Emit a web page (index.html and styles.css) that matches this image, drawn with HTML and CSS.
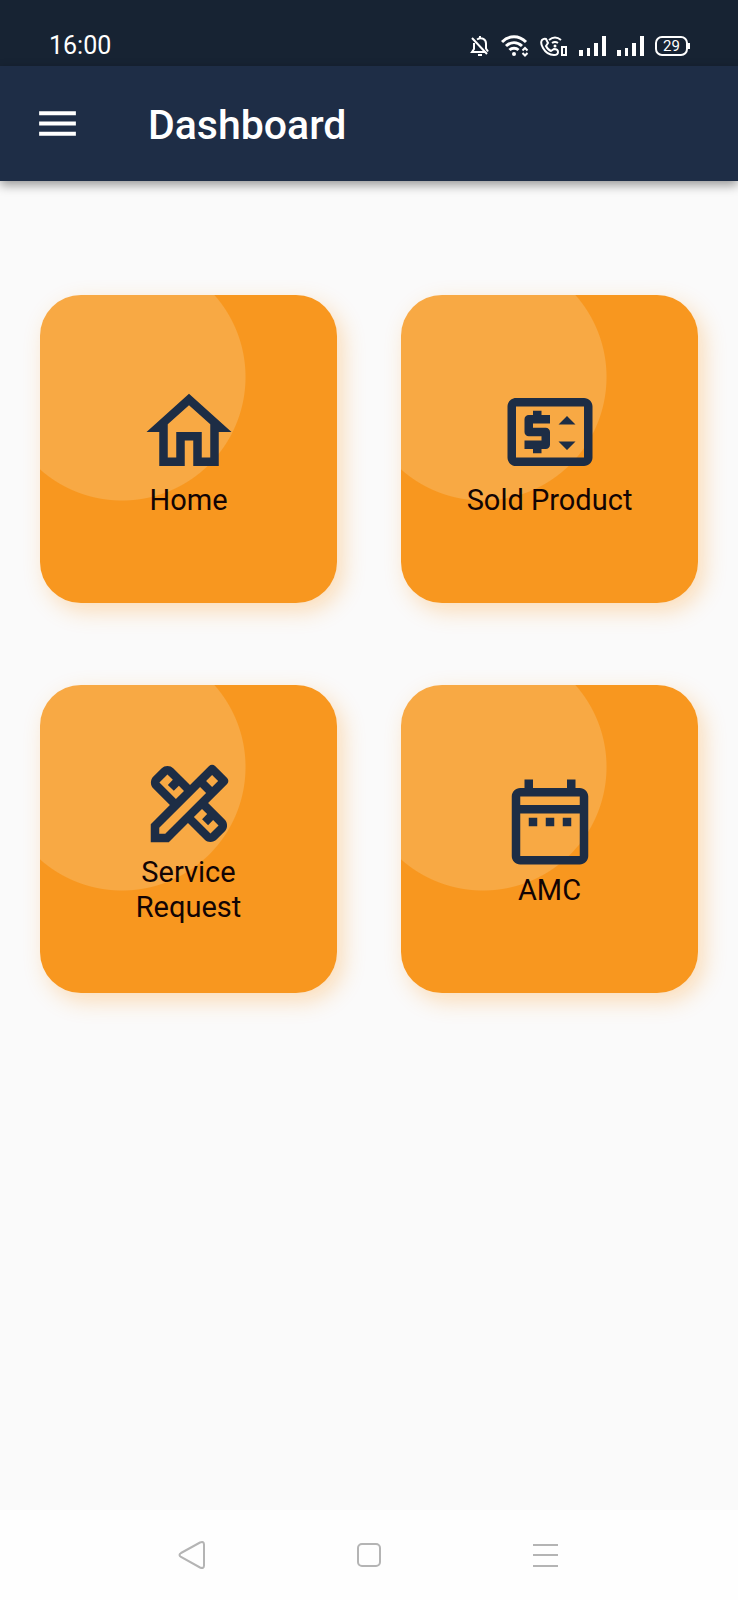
FILE: index.html
```
<!DOCTYPE html>
<html lang="en">
<head>
    <meta charset="UTF-8">
    <meta name="viewport" content="width=device-width, initial-scale=1.0">
    <title>Dashboard</title>
    <link rel="stylesheet" href="styles.css">
</head>
<body>
    <div class="status-bar">
        <span class="clock">16:00</span>
        <div class="status-icons">
            <svg class="bell" width="20" height="22" viewBox="0 0 20 22" fill="none" stroke="#fff" stroke-width="2">
                <path d="M4 8v6l-2 3h13M7 4.500c5-3 9 0 9 4v5l2 3M10 1v2M2 3l15 16"/>
                <path d="M8 20h4"/>
            </svg>
            <svg class="wifi" width="28" height="22" viewBox="0 0 28 22" fill="none" stroke="#fff" stroke-width="3">
                <path d="M1 7c7-7 17-7 24 0M5 11c5-4.500 11-4.500 16 0M8.500 15c2.500-2.500 6.500-2.500 9 0"/>
                <circle cx="13" cy="19" r="2" fill="#fff" stroke="none"/>
                <path d="M21.500 15.500l2.500-2.500 2.500 2.500M21.500 18l2.500 2.500 2.500-2.500" stroke-width="2"/>
            </svg>
            <svg class="call" width="28" height="22" viewBox="0 0 28 22" fill="none" stroke="#fff" stroke-width="2">
                <path d="M2 5q2-2 4-1l2 4-2 3q2 4 5 5l3-2q4 0 4 3t-4 3Q7 20 3 13 0 8 2 5z"/>
                <path d="M9 5q6-5 12 0M12 8q3-2 6 0"/>
                <circle cx="15" cy="11" r="1.500" fill="#fff" stroke="none"/>
                <path d="M22 12h4v8h-4z"/>
            </svg>
            <svg class="signal" width="27" height="22" viewBox="0 0 27 22" fill="#fff">
                <path d="M0 15h4v6H0zM8 13h3v8H8zM15 8h4v13h-4zM23 1h4v20h-4z"/>
            </svg>
            <svg class="signal" width="27" height="22" viewBox="0 0 27 22" fill="#fff">
                <path d="M0 15h4v6H0zM8 13h3v8H8zM15 8h4v13h-4zM23 1h4v20h-4z"/>
            </svg>
            <div class="battery">29</div>
        </div>
    </div>

    <header class="app-bar">
        <button class="menu-button" aria-label="Open menu">
            <svg viewBox="0 0 24 24" fill="currentColor"><path d="M3 18h18v-2H3v2zm0-5h18v-2H3v2zm0-7v2h18V6H3z"/></svg>
        </button>
        <h1>Dashboard</h1>
    </header>

    <main class="dashboard">
        <a class="card" href="#home">
            <svg viewBox="0 0 24 24" fill="currentColor"><path d="M12 5.690l5 4.500V18h-2v-6H9v6H7v-7.810l5-4.500M12 3L2 12h3v8h6v-6h2v6h6v-8h3L12 3z"/></svg>
            <span>Home</span>
        </a>
        <a class="card" href="#sold-product">
            <svg viewBox="0 0 24 24" fill="currentColor">
                <path d="M20 4H4c-1.110 0-2 .89-2 2v12c0 1.110.89 2 2 2h16c1.110 0 2-.89 2-2V6c0-1.110-.89-2-2-2zm0 14H4V6h16v12z"/>
                <path d="M6 14v2h2v1h2v-1h1c.55 0 1-.45 1-1v-3c0-.55-.45-1-1-1H8v-1h4V8h-2V7H8v1H7c-.55 0-1 .45-1 1v3c0 .55.45 1 1 1h3v1H6z"/>
                <path d="M16 8.250l-2 2h4zM14 14.250l2 2 2-2z"/>
            </svg>
            <span>Sold Product</span>
        </a>
        <a class="card" href="#service-request">
            <svg viewBox="0 0 24 24" fill="currentColor" fill-rule="evenodd">
                <path d="M20.970 7.270c.39-.39.39-1.020 0-1.410l-2.830-2.830c-.39-.39-1.020-.39-1.410 0l-4.490 4.490-3.890-3.890c-.78-.78-2.050-.78-2.830 0l-1.900 1.900c-.78.78-.78 2.050 0 2.830l3.890 3.890L3 16.760V21h4.240l4.520-4.520 3.890 3.890c.95.95 2.230.6 2.830 0l1.900-1.900c.78-.78.78-2.050 0-2.830l-3.890-3.890 4.480-4.480zM5.040 6.940l1.890-1.900L8.200 6.310 7.020 7.500l1.410 1.410 1.190-1.190 1.200 1.200-1.900 1.900-3.880-3.880zM16.270 14.380l-1.190 1.190 1.410 1.410 1.190-1.190 1.270 1.270-1.900 1.900-3.890-3.890 1.900-1.900 1.210 1.210zM6.410 19H5v-1.410l9.610-9.610 1.410 1.410L6.410 19zM16.020 6.560l1.410-1.410 1.420 1.420-1.410 1.410z"/>
            </svg>
            <span>Service Request</span>
        </a>
        <a class="card" href="#amc">
            <svg viewBox="0 0 24 24" fill="currentColor"><path d="M7 11h2v2H7v-2zm14-5v14c0 1.100-.9 2-2 2H5c-1.110 0-2-.9-2-2V6c0-1.100.88-2 2-2h1V2h2v2h8V2h2v2h1c1.100 0 2 .9 2 2zM5 8h14V6H5v2zm14 12V10H5v10h14zm-4-7h2v-2h-2v2zm-4 0h2v-2h-2v2z"/></svg>
            <span>AMC</span>
        </a>
    </main>

    <nav class="nav-bar">
        <button aria-label="Back">
            <svg width="28" height="28" viewBox="0 0 28 28"><path d="M3 12L22 1.500q4-1.500 4 2v21q0 3.500-4 2L3 16q-3-2 0-4z"/></svg>
        </button>
        <button aria-label="Home screen">
            <svg width="28" height="28" viewBox="0 0 28 28"><rect x="3" y="3" width="22" height="22" rx="4"/></svg>
        </button>
        <button aria-label="Recent apps">
            <svg width="28" height="28" viewBox="0 0 28 28"><path d="M1 4h25M1 14h25M1 25h25"/></svg>
        </button>
    </nav>
</body>
</html>
```

FILE: styles.css
```
* {
    margin: 0;
    padding: 0;
    box-sizing: border-box;
}

body {
    font-family: Roboto, 'Liberation Sans', sans-serif;
    background: #fafafa;
    min-height: 100vh;
    display: flex;
    flex-direction: column;
}

svg {
    display: block;
}

button {
    border: none;
    background: none;
    cursor: pointer;
}

/* Status bar */
.status-bar {
    height: 66px;
    padding: 25px 48px 0 49px;
    background: #172333;
    color: white;
    display: flex;
    align-items: center;
    justify-content: space-between;
}

.clock {
    font-size: 25px;
    line-height: 32px;
}

.status-icons {
    display: flex;
    align-items: center;
    gap: 11px;
}

.battery {
    position: relative;
    width: 33px;
    height: 20px;
    border: 2px solid white;
    border-radius: 7px;
    font-size: 15px;
    line-height: 16px;
    text-align: center;
    margin-right: 2px;
}

.battery::after {
    content: '';
    position: absolute;
    top: 5px;
    right: -4px;
    width: 2px;
    height: 6px;
    background: white;
}

/* App bar */
.app-bar {
    height: 115px;
    padding: 0 33px;
    background: #1e2d46;
    color: white;
    display: flex;
    align-items: center;
    gap: 66px;
    box-shadow: 0 4px 10px rgba(0, 0, 0, 0.4);
}

.menu-button {
    color: white;
}

.menu-button svg {
    width: 49px;
    height: 49px;
}

h1 {
    font-size: 41px;
    font-weight: 500;
    line-height: 48px;
    padding-top: 2px;
}

/* Cards */
.dashboard {
    flex: 1;
    padding: 114px 40px 82px;
    display: grid;
    grid-template-columns: 1fr 1fr;
    align-content: start;
    gap: 82px 64px;
}

.card {
    position: relative;
    min-height: 308px;
    padding: 0 60px;
    border-radius: 41px;
    background: #f8971f;
    background-image: radial-gradient(circle at 82px 82px, #f8a944 123px, transparent 124px);
    box-shadow: 6px 8px 22px rgba(255, 152, 30, 0.3);
    color: #1d2d45;
    text-decoration: none;
    display: flex;
    flex-direction: column;
    align-items: center;
    justify-content: center;
}

.card svg {
    width: 102px;
    height: 102px;
}

.card span {
    color: #120404;
    font-size: 29px;
    line-height: 35px;
    text-align: center;
}

/* Navigation bar */
.nav-bar {
    height: 90px;
    padding: 0 14%;
    background: #fefefe;
    display: grid;
    grid-template-columns: repeat(3, 1fr);
    place-items: center;
}

.nav-bar svg {
    fill: none;
    stroke: #b4b4b4;
    stroke-width: 2;
}
```
